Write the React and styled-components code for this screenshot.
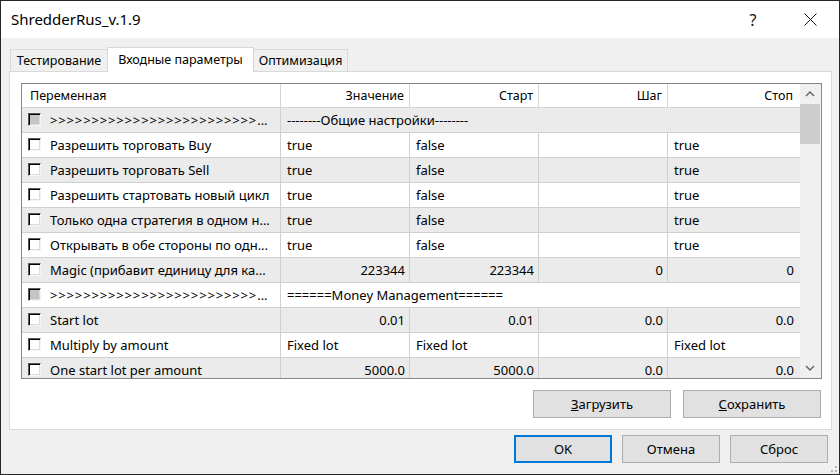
import React from 'react';
import styled, { createGlobalStyle } from 'styled-components';

const GlobalStyle = createGlobalStyle`
  html, body {
    margin: 0;
    padding: 0;
    background: #fff;
  }
  body {
    font-family: 'Noto Sans', 'Segoe UI', sans-serif;
    font-size: 13px;
    color: #000;
  }
  * {
    box-sizing: border-box;
  }
`;

const COLS = '259px 129px 129px 129px 132px';

const Window = styled.div`
  position: relative;
  width: 840px;
  height: 475px;
  display: flex;
  flex-direction: column;
  border: 1px solid #262626;
  background: #f0f0f0;
  overflow: hidden;
`;
const TitleBar = styled.div`
  flex-shrink: 0;
  height: 37px;
  display: flex;
  align-items: center;
  padding-left: 10px;
  padding-right: 6px;
  background: #fff;
`;
const Title = styled.div`
  flex: 1;
  font-size: 15px;
  padding-bottom: 1px;
`;
const TitleButton = styled.div`
  width: 46px;
  height: 100%;
  display: flex;
  align-items: center;
  justify-content: center;
  font-size: 16px;
  color: #111;
  margin-left: ${p => p.$gap || 0}px;
`;
const Body = styled.div`
  flex: 1;
  display: flex;
  flex-direction: column;
  padding: 9px 7px 0 8px;
`;
const TabStrip = styled.div`
  height: 24px;
  display: flex;
  align-items: flex-end;
  padding-left: 1px;
  position: relative;
  z-index: 1;
`;
const Tab = styled.div`
  width: ${p => p.$w}px;
  height: ${p => (p.$active ? 25 : 22)}px;
  margin-bottom: ${p => (p.$active ? -1 : 0)}px;
  margin-left: ${p => (p.$first ? 0 : -1)}px;
  display: flex;
  align-items: center;
  justify-content: center;
  padding-bottom: ${p => (p.$active ? 2 : 0)}px;
  font-size: 12.5px;
  background: ${p => (p.$active ? '#fff' : '#f0f0f0')};
  border: 1px solid #d9d9d9;
  border-bottom: none;
  position: relative;
  z-index: ${p => (p.$active ? 2 : 1)};
  white-space: nowrap;
`;
const Panel = styled.div`
  display: flex;
  flex-direction: column;
  gap: 11px;
  padding: 11px 9px 11px 11px;
  background: #fff;
  border: 1px solid #d9d9d9;
`;
const Grid = styled.div`
  height: 296px;
  display: flex;
  border: 1px solid #828790;
`;
const GridBody = styled.div`
  flex: 1;
  overflow: hidden;
`;
const HeaderRow = styled.div`
  display: grid;
  grid-template-columns: ${COLS};
  height: 24px;
  background: #fff;
  border-bottom: 1px solid #d5d5d5;
`;
const HeaderCell = styled.div`
  display: flex;
  align-items: center;
  justify-content: ${p => (p.$left ? 'flex-start' : 'flex-end')};
  padding: 0 ${p => p.$pr || 5}px 0 8px;
  font-size: 12.5px;
  border-right: ${p => (p.$last ? 'none' : '1px solid #d5d5d5')};
`;
const Row = styled.div`
  display: grid;
  grid-template-columns: ${COLS};
  height: 25px;
  background: ${p => (p.$shade ? '#ebebeb' : '#fff')};
  border-bottom: 1px solid #d0d0d0;
`;
const NameCell = styled.div`
  display: flex;
  align-items: center;
  gap: 9px;
  padding-left: 6px;
  border-right: 1px solid #d0d0d0;
  white-space: nowrap;
  overflow: hidden;
`;
const Cell = styled.div`
  display: flex;
  align-items: center;
  justify-content: ${p => (p.$num ? 'flex-end' : 'flex-start')};
  padding: 0 ${p => (p.$last ? 6 : 4)}px 0 6px;
  border-right: ${p => (p.$last ? 'none' : '1px solid #d0d0d0')};
  white-space: nowrap;
  overflow: hidden;
`;
const SpanCell = styled(Cell)`
  grid-column: span 4;
  border-right: none;
`;
const Arrows = styled.span`
  letter-spacing: 0.85px;
`;
const Check = styled.span`
  flex-shrink: 0;
  width: 13px;
  height: 13px;
  margin-bottom: 1px;
  background: ${p => (p.$disabled ? '#c4c4c4' : '#fff')};
  border-top: 1px solid #5a5a5a;
  border-left: 1px solid #5a5a5a;
  border-right: 1px solid #f4f4f4;
  border-bottom: 1px solid #f4f4f4;
  box-shadow: inset 1px 1px 0 #000, inset -1px -1px 0 #dcdcdc;
`;
const ScrollBar = styled.div`
  width: 21px;
  display: flex;
  flex-direction: column;
  background: #f0f0f0;
`;
const ScrollArrow = styled.div`
  height: 20px;
  display: flex;
  align-items: center;
  justify-content: center;
  padding-right: 1px;
`;
const Thumb = styled.div`
  height: 40px;
  margin-right: 1px;
  background: #cdcdcd;
`;
const Track = styled.div`
  flex: 1;
`;
const ButtonRow = styled.div`
  display: flex;
  justify-content: flex-end;
  gap: 12px;
  margin-right: 1px;
`;
const Footer = styled.div`
  display: flex;
  justify-content: flex-end;
  gap: 10px;
  margin: 5px 4px 0 0;
`;
const Button = styled.button`
  width: ${p => p.$w}px;
  height: 28px;
  padding: 0;
  font-family: inherit;
  font-size: 13px;
  color: #000;
  background: #e1e1e1;
  border: ${p => (p.$default ? '2px solid #0078d7' : '1px solid #adadad')};
  border-radius: 0;
`;
const Grip = styled.svg`
  position: absolute;
  right: 1px;
  bottom: 1px;
`;

const rows = [
  { sep: true, value: '--------Общие настройки--------' },
  { name: 'Разрешить торговать Buy', value: 'true', start: 'false', step: '', stop: 'true' },
  { name: 'Разрешить торговать Sell', value: 'true', start: 'false', step: '', stop: 'true' },
  { name: 'Разрешить стартовать новый цикл', value: 'true', start: 'false', step: '', stop: 'true' },
  { name: 'Только одна стратегия в одном н...', value: 'true', start: 'false', step: '', stop: 'true' },
  { name: 'Открывать в обе стороны по одн...', value: 'true', start: 'false', step: '', stop: 'true' },
  { name: 'Magic (прибавит единицу для ка...', value: '223344', start: '223344', step: '0', stop: '0', num: true },
  { sep: true, value: '======Money Management======' },
  { name: 'Start lot', value: '0.01', start: '0.01', step: '0.0', stop: '0.0', num: true },
  { name: 'Multiply by amount', value: 'Fixed lot', start: 'Fixed lot', step: '', stop: 'Fixed lot' },
  { name: 'One start lot per amount', value: '5000.0', start: '5000.0', step: '0.0', stop: '0.0', num: true },
];

const Chevron = ({ down }) => (
  <svg width="10" height="6" viewBox="0 0 10 6">
    <polyline
      points={down ? '1,1 5,5 9,1' : '1,5 5,1 9,5'}
      fill="none"
      stroke="#606060"
      strokeWidth="1.4"
    />
  </svg>
);

const ParamRow = ({ row, shade }) => {
  if (row.sep) {
    return (
      <Row $shade={shade}>
        <NameCell>
          <Check $disabled />
          <span><Arrows>{'>'.repeat(25)}</Arrows>...</span>
        </NameCell>
        <SpanCell>{row.value}</SpanCell>
      </Row>
    );
  }
  return (
    <Row $shade={shade}>
      <NameCell>
        <Check />
        <span>{row.name}</span>
      </NameCell>
      <Cell $num={row.num}>{row.value}</Cell>
      <Cell $num={row.num}>{row.start}</Cell>
      <Cell $num={row.num}>{row.step}</Cell>
      <Cell $num={row.num} $last>{row.stop}</Cell>
    </Row>
  );
};

export default function App() {
  return (
    <>
      <GlobalStyle />
      <Window>
        <TitleBar>
          <Title>ShredderRus_v.1.9</Title>
          <TitleButton>?</TitleButton>
          <TitleButton $gap={11}>
            <svg width="13" height="13" viewBox="0 0 13 13">
              <path d="M0.5 0.5 L12.5 12.5 M12.5 0.5 L0.5 12.5" stroke="#111" strokeWidth="1" />
            </svg>
          </TitleButton>
        </TitleBar>
        <Body>
          <TabStrip>
            <Tab $first $w={98}>Тестирование</Tab>
            <Tab $active $w={147}>Входные параметры</Tab>
            <Tab $w={95}>Оптимизация</Tab>
          </TabStrip>
          <Panel>
            <Grid>
              <GridBody>
                <HeaderRow>
                  <HeaderCell $left>Переменная</HeaderCell>
                  <HeaderCell>Значение</HeaderCell>
                  <HeaderCell>Старт</HeaderCell>
                  <HeaderCell>Шаг</HeaderCell>
                  <HeaderCell $last $pr={7}>Стоп</HeaderCell>
                </HeaderRow>
                {rows.map((row, i) => (
                  <ParamRow key={i} row={row} shade={i % 2 === 0} />
                ))}
              </GridBody>
              <ScrollBar>
                <ScrollArrow><Chevron /></ScrollArrow>
                <Thumb />
                <Track />
                <ScrollArrow><Chevron down /></ScrollArrow>
              </ScrollBar>
            </Grid>
            <ButtonRow>
              <Button $w={138}><u>З</u>агрузить</Button>
              <Button $w={138}><u>С</u>охранить</Button>
            </ButtonRow>
          </Panel>
          <Footer>
            <Button $w={98} $default>OK</Button>
            <Button $w={98}>Отмена</Button>
            <Button $w={98}>Сброс</Button>
          </Footer>
        </Body>
        <Grip width="10" height="10" viewBox="0 0 10 10">
          <rect x="7" y="3" width="2" height="2" fill="#b8b8b8" />
          <rect x="3" y="7" width="2" height="2" fill="#b8b8b8" />
          <rect x="7" y="7" width="2" height="2" fill="#b8b8b8" />
        </Grip>
      </Window>
    </>
  );
}
